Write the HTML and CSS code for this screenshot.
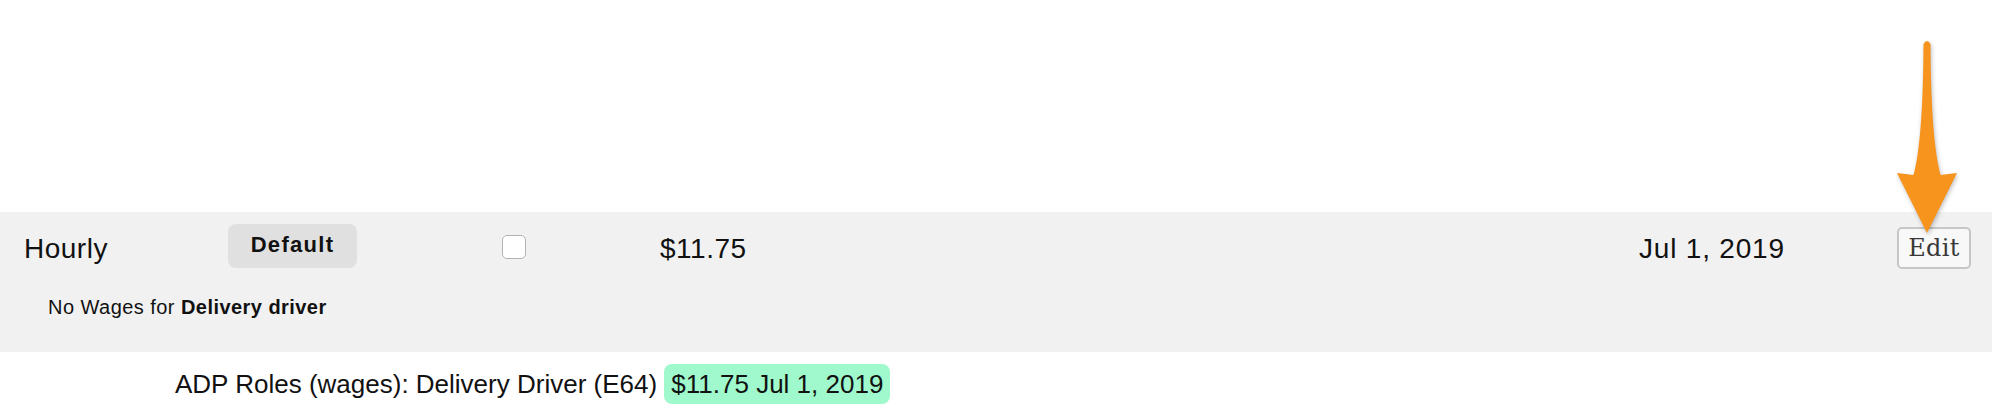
FILE: index.html
```html
<!DOCTYPE html>
<html lang="en">
<head>
<meta charset="utf-8">
<title>Wages</title>
<link rel="stylesheet" href="styles.css">
</head>
<body>
<div class="page">
  <div class="top-space"></div>
  <section class="wage-block">
    <div class="wage-row">
      <div class="cell cell-type">Hourly</div>
      <div class="cell cell-badge"><span class="badge-default">Default</span></div>
      <div class="cell cell-check"><span class="checkbox"></span></div>
      <div class="cell cell-rate">$11.75</div>
      <div class="cell cell-date">Jul 1, 2019</div>
      <div class="cell cell-action"><button class="btn-edit" type="button">Edit</button></div>
    </div>
    <div class="wage-note">No Wages for <strong>Delivery driver</strong></div>
  </section>
  <div class="adp-line">ADP Roles (wages): Delivery Driver (E64) <span class="adp-badge">$11.75 Jul 1, 2019</span></div>

  <svg class="arrow" width="80" height="215" viewBox="0 0 80 215" aria-hidden="true">
    <path d="M33.5 14 Q33 110 23.5 145 L7 143 L37 203 L67 143 L50.5 145 Q41 110 40.5 14 Q37 8 33.5 14 Z" fill="#f7941e"/>
  </svg>
</div>
</body>
</html>
```

FILE: styles.css
```css
html, body {
  margin: 0;
  padding: 0;
  background: #ffffff;
}

.page {
  position: relative;
  width: 1992px;
  height: 412px;
  overflow: hidden;
  font-family: "Liberation Sans", Arial, Helvetica, sans-serif;
  color: #111111;
}

.top-space {
  height: 212px;
}

.wage-block {
  height: 140px;
  background: #f1f1f1;
  box-sizing: border-box;
}

.wage-row {
  display: grid;
  grid-template-columns: 204px 274px 158px 979px 258px 74px;
  align-items: center;
  height: 70px;
  padding-left: 24px;
}

.cell {
  font-size: 28px;
  line-height: 34px;
  letter-spacing: 0.5px;
}

.cell-type,
.cell-rate,
.cell-date {
  padding-top: 3px;
}

.cell-date {
  letter-spacing: 0.8px;
}

.cell-badge {
  display: flex;
}

.badge-default {
  display: inline-block;
  width: 129px;
  height: 44px;
  line-height: 42px;
  box-sizing: border-box;
  text-align: center;
  background: #e0e0e0;
  border-radius: 8px;
  font-weight: bold;
  font-size: 22px;
  letter-spacing: 1.3px;
  color: #111111;
  margin-top: -3px;
}

.cell-check {
  display: flex;
}

.checkbox {
  display: block;
  width: 24px;
  height: 24px;
  box-sizing: border-box;
  border: 1.5px solid #b3b3b3;
  border-radius: 5px;
  background: #ffffff;
  margin-top: -1px;
}

.cell-action {
  display: flex;
}

.btn-edit {
  width: 74px;
  height: 42px;
  box-sizing: border-box;
  margin: 1px 0 0 0;
  padding: 0;
  background: #f8f8f8;
  border: 2px solid #c6c6c6;
  border-radius: 5px;
  font-family: "DejaVu Serif", "Liberation Serif", serif;
  font-size: 24px;
  line-height: 36px;
  color: #383838;
  letter-spacing: 0.3px;
}

.wage-note {
  margin-top: 13px;
  padding-left: 48px;
  font-size: 20px;
  line-height: 24px;
  letter-spacing: 0.45px;
  color: #111111;
}

.wage-note strong {
  font-weight: bold;
}

.adp-line {
  margin-top: 12px;
  padding-left: 175px;
  font-size: 26px;
  line-height: 40px;
  color: #111111;
}

.adp-badge {
  display: inline-block;
  padding: 0 7px;
  line-height: 40px;
  background: #9ff9cc;
  border-radius: 8px;
}

.arrow {
  position: absolute;
  left: 1890px;
  top: 30px;
  filter: drop-shadow(1px 2px 2px rgba(0, 0, 0, 0.25));
}
```
